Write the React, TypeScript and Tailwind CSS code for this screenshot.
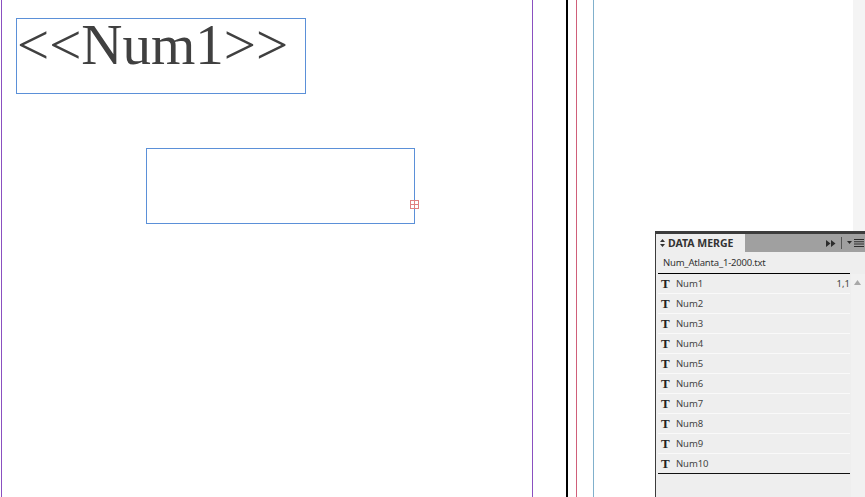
const FIELDS = ["Num1", "Num2", "Num3", "Num4", "Num5", "Num6", "Num7", "Num8", "Num9", "Num10"];

function FieldRow({ name, first }: { name: string; first: boolean }) {
  return (
    <div className="flex h-5 w-[192px] items-center border-b border-[#f9f9f9] bg-[#eeeeee] pl-[3px] last:h-[19px] last:border-b-0">
      <span className="w-[15px] font-['Liberation_Serif',serif] text-[13px] leading-none font-bold text-[#222222]">T</span>
      <span className="text-[9.5px] leading-none tracking-[-0.1px] text-[#444444]">{name}</span>
      {first ? <span className="ml-auto text-[9.5px] leading-none text-[#444444]">1,1</span> : null}
    </div>
  );
}

function DataMergePanel() {
  return (
    <div className="absolute top-[231px] left-[655px] flex h-[266px] w-[210px] flex-col border-t-[3px] border-l border-[#3c3c3c] bg-[#eeeeee] font-['Noto_Sans',sans-serif]">
      <div className="flex h-[18px] shrink-0 bg-[#a0a0a0]">
        <div className="flex w-[89px] items-center gap-[3px] bg-[#eeeeee] pl-[4px]">
          <svg width="5" height="8" viewBox="0 0 5 8" className="fill-[#333333]">
            <path d="M2.5 0 5 3H0zM2.5 8 0 5h5z" />
          </svg>
          <span className="text-[10.5px] leading-none font-bold text-[#333333]">DATA MERGE</span>
        </div>
        <div className="ml-auto flex items-center gap-[5px] pr-[1px]">
          <svg width="10" height="7" viewBox="0 0 10 7" className="fill-[#2c2c2c]">
            <path d="M0 0 4.5 3.5 0 7zM5 0 9.5 3.5 5 7z" />
          </svg>
          <div className="h-3 w-px bg-[#555555]" />
          <svg width="17" height="8" viewBox="0 0 17 8" className="fill-[#2c2c2c]">
            <path d="M0 2h5L2.5 5z" />
            <path d="M7 0h10v1H7zM7 2.300h10v1H7zM7 4.600h10v1H7zM7 6.900h10v1H7z" />
          </svg>
        </div>
      </div>
      <div className="ml-[2px] flex h-[22px] w-[192px] shrink-0 items-center border-b border-black pl-[5px]">
        <span className="text-[9.5px] leading-none tracking-[-0.2px] text-[#333333]">Num_Atlanta_1-2000.txt</span>
      </div>
      <div className="flex min-h-0 flex-1 pl-[2px]">
        <div className="flex w-[192px] flex-col">
          <div className="border-b border-[#111111]">
            {FIELDS.map((name, i) => (
              <FieldRow key={name} name={name} first={i === 0} />
            ))}
          </div>
        </div>
        <div className="ml-px flex-1 bg-[#f1f1f1] pt-[6px] pl-[3px]">
          <svg width="7" height="5" viewBox="0 0 7 5" className="fill-[#a8a8a8]">
            <path d="M3.5 0 7 5H0z" />
          </svg>
        </div>
      </div>
    </div>
  );
}

export default function App() {
  return (
    <div className="relative h-[497px] w-[865px] overflow-hidden bg-white">
      {/* page guides */}
      <div className="absolute top-0 left-px h-full w-px bg-[#8a50c0]" />
      <div className="absolute top-0 left-[532px] h-full w-px bg-[#8a50c0]" />
      <div className="absolute top-0 left-[566px] h-full w-[2px] bg-black" />
      <div className="absolute top-0 left-[576px] h-full w-px bg-[#d0607a]" />
      <div className="absolute top-0 left-[593px] h-full w-px bg-[#80b0cc]" />
      <div className="absolute top-0 left-[853px] h-full w-[12px] bg-[#f4f4f4]" />

      {/* text frames */}
      <div className="absolute top-[18px] left-[16px] h-[76px] w-[290px] border border-[#5b90d8]">
        <span className="absolute top-[-12px] left-0 font-['Liberation_Serif',serif] text-[57px] leading-[76px] whitespace-nowrap text-[#404040]">
          {"<<Num1>>"}
        </span>
      </div>
      <div className="absolute top-[148px] left-[146px] h-[76px] w-[269px] border border-[#5b90d8]" />
      <div className="absolute top-[200px] left-[410px] flex h-[9px] w-[9px] items-center justify-center border border-[#e08080] bg-white">
        <svg width="7" height="7" viewBox="0 0 7 7" className="stroke-[#e08080]">
          <path d="M3.500 0v7M0 3.500h7" />
        </svg>
      </div>

      <DataMergePanel />
    </div>
  );
}
